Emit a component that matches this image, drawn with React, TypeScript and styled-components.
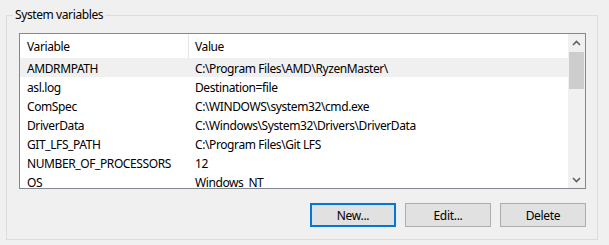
import React from "react";
import styled, { createGlobalStyle } from "styled-components";

const Global = createGlobalStyle`
  html, body { margin: 0; padding: 0; background: #f0f0f0; }
  body { font-family: "Segoe UI", "Noto Sans", "Open Sans", sans-serif; font-size: 12px; color: #000; letter-spacing: -0.4px; }
`;

const Page = styled.div`
  width: 609px;
  height: 245px;
  padding: 0 0 0 6px;
  box-sizing: border-box;
  overflow: hidden;
`;

const Group = styled.fieldset`
  margin: 7px 0 0 0;
  width: 592px;
  height: 233px;
  box-sizing: border-box;
  border: 1px solid #dcdcdc;
  padding: 10px 11px 0 12px;
  display: flex;
  flex-direction: column;
  gap: 14px;
`;

const Legend = styled.legend`
  margin-left: -6px;
  padding: 0 2px;
  font-size: 12px;
  line-height: 16px;
`;

const ListBox = styled.div`
  width: 567px;
  height: 156px;
  flex-shrink: 0;
  box-sizing: border-box;
  border: 1px solid #828790;
  background: #fff;
  display: flex;
`;

const Table = styled.div`
  flex: 1;
  display: flex;
  flex-direction: column;
  overflow: hidden;
`;

const HeaderRow = styled.div`
  display: grid;
  grid-template-columns: 169px 1fr;
  height: 24px;
  flex-shrink: 0;
  align-items: stretch;
`;

const HeaderCell = styled.div<{ $sep?: boolean }>`
  display: flex;
  align-items: center;
  padding: 1px 0 0 ${(p) => (p.$sep ? "7px" : "6px")};
  border-right: ${(p) => (p.$sep ? "1px solid #e5e5e5" : "none")};
`;

const Row = styled.div<{ $sel?: boolean }>`
  display: grid;
  grid-template-columns: 169px 1fr;
  height: 19px;
  flex-shrink: 0;
  box-sizing: border-box;
  padding-top: 2px;
  line-height: 17px;
  background: ${(p) => (p.$sel ? "#f0f0f0" : "transparent")};
  white-space: nowrap;
`;

const Cell = styled.div<{ $value?: boolean }>`
  padding-left: ${(p) => (p.$value ? "6px" : "7px")};
  overflow: hidden;
`;

const ScrollBar = styled.div`
  width: 17px;
  background: #f0f0f0;
  display: flex;
  flex-direction: column;
`;

const Arrow = styled.div`
  height: 17px;
  display: flex;
  align-items: center;
  justify-content: center;
`;

const Track = styled.div`
  flex: 1;
  display: flex;
  flex-direction: column;
`;

const Thumb = styled.div`
  margin: 1px 1px 0 1px;
  height: 37px;
  background: #cdcdcd;
`;

const Buttons = styled.div`
  display: flex;
  justify-content: flex-end;
  gap: 9px;
  width: 567px;
`;

const Button = styled.button<{ $default?: boolean }>`
  width: 86px;
  height: 24px;
  box-sizing: border-box;
  background: #e1e1e1;
  border: ${(p) => (p.$default ? "2px solid #0078d7" : "1px solid #adadad")};
  font-family: "Segoe UI", "Noto Sans", "Open Sans", sans-serif;
  font-size: 12px;
  letter-spacing: -0.3px;
  color: #000;
  padding: 0;
  margin: 0;
`;

const rows: [string, string][] = [
  ["AMDRMPATH", "C:\\Program Files\\AMD\\RyzenMaster\\"],
  ["asl.log", "Destination=file"],
  ["ComSpec", "C:\\WINDOWS\\system32\\cmd.exe"],
  ["DriverData", "C:\\Windows\\System32\\Drivers\\DriverData"],
  ["GIT_LFS_PATH", "C:\\Program Files\\Git LFS"],
  ["NUMBER_OF_PROCESSORS", "12"],
  ["OS", "Windows_NT"],
];

const Chevron = ({ up }: { up?: boolean }) => (
  <svg width="9" height="6" viewBox="0 0 9 6">
    <path
      d={up ? "M1 5 L4.5 1.5 L8 5" : "M1 1 L4.5 4.5 L8 1"}
      fill="none"
      stroke="#606060"
      strokeWidth="1.6"
    />
  </svg>
);

export default function App() {
  return (
    <>
      <Global />
      <Page>
        <Group>
          <Legend>System variables</Legend>
          <ListBox>
            <Table>
              <HeaderRow>
                <HeaderCell $sep>Variable</HeaderCell>
                <HeaderCell>Value</HeaderCell>
              </HeaderRow>
              {rows.map(([k, v], i) => (
                <Row key={k} $sel={i === 0}>
                  <Cell>{k}</Cell>
                  <Cell $value>{v}</Cell>
                </Row>
              ))}
            </Table>
            <ScrollBar>
              <Arrow>
                <Chevron up />
              </Arrow>
              <Track>
                <Thumb />
              </Track>
              <Arrow>
                <Chevron />
              </Arrow>
            </ScrollBar>
          </ListBox>
          <Buttons>
            <Button $default>New...</Button>
            <Button>Edit...</Button>
            <Button>Delete</Button>
          </Buttons>
        </Group>
      </Page>
    </>
  );
}
